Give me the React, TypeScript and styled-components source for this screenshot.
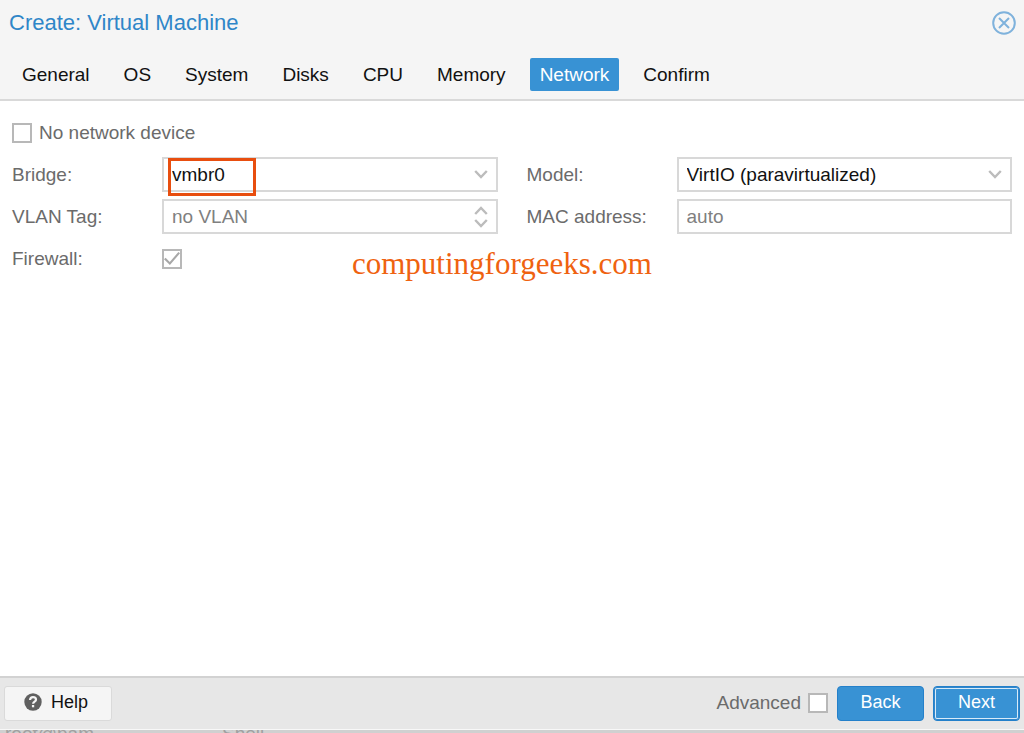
import React from "react";
import styled, { createGlobalStyle, css } from "styled-components";

const GlobalStyle = createGlobalStyle`
  *, *::before, *::after { box-sizing: border-box; }
  body { margin: 0; background: #d0d0d0; overflow: hidden; }
  body, button, input, select {
    font-family: "Liberation Sans", Arial, Helvetica, sans-serif;
    font-size: 19px;
    line-height: 22px;
  }
`;

const Page = styled.div`
  display: flex;
  flex-direction: column;
  height: 100vh;
  overflow: hidden;
`;

const Dialog = styled.section`
  flex: 1;
  display: flex;
  flex-direction: column;
  background: #fff;
  border-bottom: 1px solid #f8f8f8;
`;

const Header = styled.header`
  background: #f5f5f5;
  border-bottom: 2px solid #d9d9d9;
  padding: 8px 8px 8px 9px;
`;

const TitleBar = styled.div`
  display: flex;
  align-items: center;
  justify-content: space-between;
  height: 29px;
`;

const Title = styled.h1`
  margin: 0;
  font-size: 22px;
  font-weight: 400;
  line-height: 28px;
  color: #2f86c8;
`;

const CloseButton = styled.button`
  display: flex;
  border: 0;
  padding: 0;
  background: none;
  color: #7fb2dc;
`;

const Tabs = styled.nav`
  display: flex;
  gap: 14px;
  margin-top: 21px;
  padding-left: 3px;
`;

const Tab = styled.button<{ $active?: boolean }>`
  height: 33px;
  padding: 0 10px;
  border: 0;
  border-radius: 2px;
  background: ${(p) => (p.$active ? "#3892d4" : "transparent")};
  color: ${(p) => (p.$active ? "#fff" : "#111")};
`;

const Form = styled.main`
  flex: 1;
  padding: 15px 12px;
`;

const CheckLine = styled.label`
  display: flex;
  align-items: center;
  gap: 7px;
  height: 34px;
  color: #6b6b6b;
`;

const Columns = styled.div`
  display: grid;
  grid-template-columns: 1fr 1fr;
  column-gap: 29px;
  margin-top: 7px;
`;

const Column = styled.div`
  display: flex;
  flex-direction: column;
  gap: 7px;
`;

const Field = styled.div`
  display: flex;
  align-items: center;
  height: 35px;
`;

const Label = styled.label`
  flex: 0 0 150px;
  color: #6b6b6b;
`;

const Control = styled.div`
  position: relative;
  flex: 1;
  display: flex;
`;

const box = css`
  width: 100%;
  height: 35px;
  padding: 0 36px 0 8px;
  border: 2px solid #d8d8d8;
  border-radius: 0;
  background: #fff;
  color: #111;
  appearance: none;
  outline: none;
`;

const Select = styled.select`
  ${box}
`;

const TextInput = styled.input`
  ${box}
  &::placeholder { color: #808080; opacity: 1; }
`;

const Trigger = styled.span`
  position: absolute;
  top: 0;
  right: 10px;
  height: 100%;
  display: flex;
  align-items: center;
  color: #bcbcbc;
  pointer-events: none;
`;

const Highlight = styled.span`
  position: absolute;
  top: 1px;
  left: 6px;
  width: 88px;
  height: 38px;
  border: 3px solid #e84e0f;
  pointer-events: none;
  z-index: 1;
`;

const Checkbox = styled.input`
  appearance: none;
  display: grid;
  place-content: center;
  flex: none;
  width: 20px;
  height: 20px;
  margin: 0;
  border: 2px solid #b8b8b8;
  background: #fff;
  &:checked::after {
    content: "";
    width: 16px;
    height: 13px;
    background: #a8a8a8;
    clip-path: polygon(0 55%, 10% 45%, 36% 76%, 90% 0, 100% 10%, 37% 100%);
  }
`;

const Watermark = styled.p`
  position: absolute;
  left: 352px;
  top: 246px;
  margin: 0;
  font-family: "Liberation Serif", "Times New Roman", serif;
  font-size: 31px;
  line-height: 36px;
  color: #ef6210;
`;

const Footer = styled.footer`
  display: flex;
  align-items: center;
  justify-content: space-between;
  height: 53px;
  padding: 0 4px 1px;
  border-top: 2px solid #d2d2d2;
  background: #e7e7e7;
`;

const Actions = styled.div`
  display: flex;
  align-items: center;
  gap: 9px;
`;

const AdvancedLabel = styled.label`
  display: flex;
  align-items: center;
  gap: 7px;
  color: #6b6b6b;
`;

const HelpButton = styled.button`
  display: flex;
  align-items: center;
  gap: 9px;
  height: 35px;
  width: 108px;
  padding: 0 0 2px 19px;
  border: 1px solid #dadada;
  border-radius: 3px;
  background: #f5f5f5;
  color: #111;
  font-size: 18px;
`;

const PrimaryButton = styled.button<{ $focused?: boolean }>`
  height: 35px;
  width: 87px;
  padding: 0 0 2px;
  border: 1px solid #2480ca;
  border-radius: 4px;
  background: #3892d4;
  color: #fff;
  font-size: 18px;
  box-shadow: ${(p) => (p.$focused ? "inset 0 0 0 1px #3087cc, inset 0 0 0 2px #d8ebf9" : "none")};
`;

const Backdrop = styled.div`
  display: flex;
  height: 3px;
  overflow: hidden;
  padding-left: 5px;
  color: #a0a0a0;
`;

const BackdropCell = styled.span`
  flex: 0 0 217px;
  margin-top: -7px;
`;

const Chevron = ({ up = false }: { up?: boolean }) => (
  <svg width="14" height="9" viewBox="0 0 14 9" fill="none" stroke="currentColor" strokeWidth="2.4">
    <path d={up ? "M1.2 8 7 2l5.800 6" : "M1.2 1 7 7l5.800-6"} />
  </svg>
);

const Spinner = styled.span`
  display: flex;
  flex-direction: column;
  gap: 4px;
`;

const tabs = ["General", "OS", "System", "Disks", "CPU", "Memory", "Network", "Confirm"];

export default function App() {
  return (
    <Page>
      <GlobalStyle />
      <Dialog aria-labelledby="title">
        <Header>
          <TitleBar>
            <Title id="title">Create: Virtual Machine</Title>
            <CloseButton aria-label="Close">
              <svg width="24" height="24" viewBox="0 0 24 24" fill="none" stroke="currentColor">
                <circle cx="12" cy="12" r="10.8" strokeWidth="2" />
                <path d="m7 7 10 10M17 7 7 17" strokeWidth="2" />
              </svg>
            </CloseButton>
          </TitleBar>
          <Tabs>
            {tabs.map((name) => (
              <Tab key={name} $active={name === "Network"}>{name}</Tab>
            ))}
          </Tabs>
        </Header>
        <Form>
          <CheckLine>
            <Checkbox type="checkbox" />
            No network device
          </CheckLine>
          <Columns>
            <Column>
              <Field>
                <Label htmlFor="bridge">Bridge:</Label>
                <Control>
                  <Select id="bridge"><option>vmbr0</option></Select>
                  <Highlight />
                  <Trigger><Chevron /></Trigger>
                </Control>
              </Field>
              <Field>
                <Label htmlFor="vlan">VLAN Tag:</Label>
                <Control>
                  <TextInput id="vlan" placeholder="no VLAN" />
                  <Trigger>
                    <Spinner><Chevron up /><Chevron /></Spinner>
                  </Trigger>
                </Control>
              </Field>
              <Field>
                <Label htmlFor="firewall">Firewall:</Label>
                <Checkbox id="firewall" type="checkbox" defaultChecked />
              </Field>
            </Column>
            <Column>
              <Field>
                <Label htmlFor="model">Model:</Label>
                <Control>
                  <Select id="model"><option>VirtIO (paravirtualized)</option></Select>
                  <Trigger><Chevron /></Trigger>
                </Control>
              </Field>
              <Field>
                <Label htmlFor="mac">MAC address:</Label>
                <Control>
                  <TextInput id="mac" placeholder="auto" />
                </Control>
              </Field>
            </Column>
          </Columns>
        </Form>
        <Footer>
          <HelpButton>
            <svg width="18" height="18" viewBox="0 0 18 18">
              <circle cx="9" cy="9" r="8.7" fill="#606060" />
              <path d="M6 7c.2-1.900 1.300-2.800 3-2.800 1.800 0 3 1 3 2.500 0 2-2.900 2-2.900 4.100" fill="none" stroke="#f5f5f5" strokeWidth="2.200" />
              <path d="M7.900 12h2.300v2.300H7.900z" fill="#f5f5f5" />
            </svg>
            Help
          </HelpButton>
          <Actions>
            <AdvancedLabel>
              Advanced
              <Checkbox type="checkbox" />
            </AdvancedLabel>
            <PrimaryButton>Back</PrimaryButton>
            <PrimaryButton $focused>Next</PrimaryButton>
          </Actions>
        </Footer>
      </Dialog>
      <Backdrop>
        <BackdropCell>root@pam</BackdropCell>
        <BackdropCell>Shell</BackdropCell>
      </Backdrop>
      <Watermark>computingforgeeks.com</Watermark>
    </Page>
  );
}
